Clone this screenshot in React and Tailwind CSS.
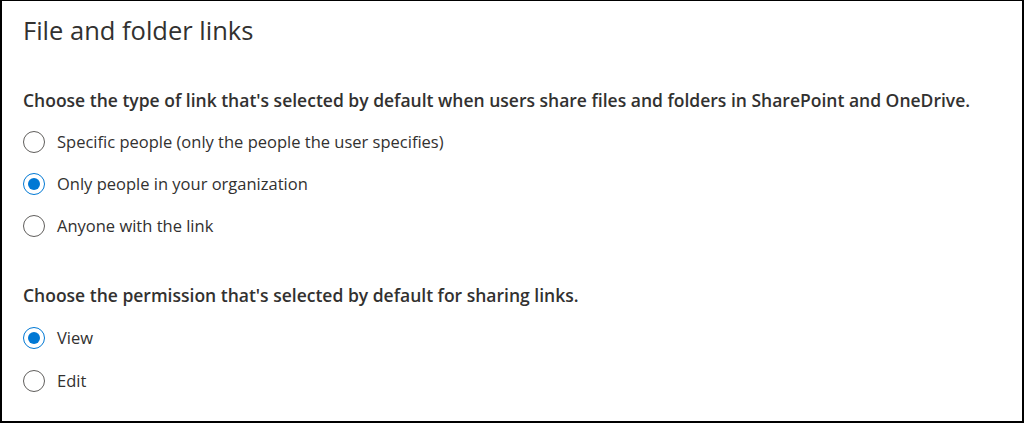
import { useState } from "react";

const Radio = ({ checked, label, onClick }) => {
  return (
    <div className="flex items-center h-[22px] cursor-pointer" onClick={onClick}>
      <div
        className={
          checked
            ? "w-[22px] h-[22px] rounded-full border border-[#0078d4] flex items-center justify-center"
            : "w-[22px] h-[22px] rounded-full border border-[#605e5c]"
        }
      >
        {checked && <div className="w-[12px] h-[12px] rounded-full bg-[#0078d4]"></div>}
      </div>
      <span className="ml-[12px] text-[16.5px] leading-[22px] text-[#323130]">{label}</span>
    </div>
  );
};

export default function App() {
  const [linkType, setLinkType] = useState("org");
  const [perm, setPerm] = useState("view");

  return (
    <div
      className="w-[1024px] h-[424px] bg-white"
      style={{ fontFamily: '"Open Sans", "Noto Sans", sans-serif' }}
    >
      <div className="w-[1024px] h-[423px] border-t border-l-2 border-r-2 border-b-2 border-black pl-[21px] pt-[13px]">
        <h1 className="text-[25.5px] leading-[32px] text-[#323130]">File and folder links</h1>

        <p className="mt-[42px] text-[17.5px] leading-[24px] font-semibold text-[#323130] whitespace-nowrap">
          Choose the type of link that's selected by default when users share files and folders in SharePoint and OneDrive.
        </p>
        <div className="mt-[19px] flex flex-col gap-[20px]">
          <Radio
            label="Specific people (only the people the user specifies)"
            checked={linkType === "specific"}
            onClick={() => setLinkType("specific")}
          />
          <Radio
            label="Only people in your organization"
            checked={linkType === "org"}
            onClick={() => setLinkType("org")}
          />
          <Radio
            label="Anyone with the link"
            checked={linkType === "anyone"}
            onClick={() => setLinkType("anyone")}
          />
        </div>

        <p className="mt-[46px] text-[17.5px] leading-[24px] font-semibold text-[#323130] whitespace-nowrap">
          Choose the permission that's selected by default for sharing links.
        </p>
        <div className="mt-[20px] flex flex-col gap-[21px]">
          <Radio label="View" checked={perm === "view"} onClick={() => setPerm("view")} />
          <Radio label="Edit" checked={perm === "edit"} onClick={() => setPerm("edit")} />
        </div>
      </div>
    </div>
  );
}
